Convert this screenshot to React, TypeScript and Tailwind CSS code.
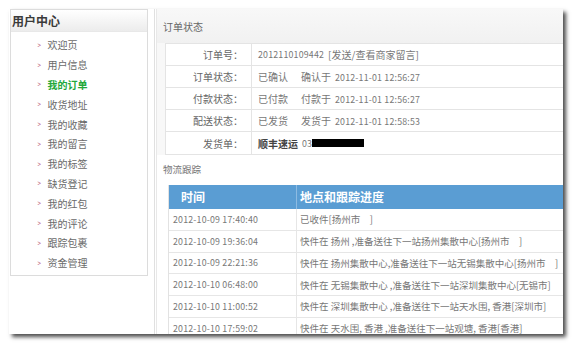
const menu = [
  "欢迎页",
  "用户信息",
  "我的订单",
  "收货地址",
  "我的收藏",
  "我的留言",
  "我的标签",
  "缺货登记",
  "我的红包",
  "我的评论",
  "跟踪包裹",
  "资金管理",
];

const tracks = [
  ["2012-10-09 17:40:40", "已收件[扬州市　]"],
  ["2012-10-09 19:36:04", "快件在 扬州 ,准备送往下一站扬州集散中心[扬州市　]"],
  ["2012-10-09 22:21:36", "快件在 扬州集散中心,准备送往下一站无锡集散中心[扬州市　]"],
  ["2012-10-10 06:48:00", "快件在 无锡集散中心 ,准备送往下一站深圳集散中心[无锡市]"],
  ["2012-10-10 11:00:52", "快件在 深圳集散中心 ,准备送往下一站天水围, 香港[深圳市]"],
  ["2012-10-10 17:59:02", "快件在 天水围, 香港 ,准备送往下一站观塘, 香港[香港]"],
];

const font = { fontFamily: '"Noto Sans CJK SC", "DejaVu Sans", sans-serif' };

const Num = ({ children }: { children: React.ReactNode }) => (
  <span className="text-[8.8px] tracking-[0.2px]">{children}</span>
);

const Sidebar = () => (
  <div className="w-[138px] shrink-0">
    <div className="border border-[#dcdcdc] bg-white h-[267px]">
      <div className="h-[22px] flex items-center pl-[1px] bg-gradient-to-b from-white to-[#ececec] border-b border-[#e8e8e8] text-[12px] font-bold text-[#3a3a3a]">
        用户中心
      </div>
      <ul className="pt-[3px]">
        {menu.map((m) => (
          <li key={m} className="h-[19.8px] flex items-center pl-[26px] text-[10px]">
            <span className="text-[#b0406a] text-[8px] mr-[6px] scale-x-75">&gt;</span>
            <span className={m === "我的订单" ? "text-[#22a83a] font-bold" : "text-[#6a6a6a]"}>{m}</span>
          </li>
        ))}
      </ul>
    </div>
  </div>
);

const OrderRow = ({ label, children }: { label: string; children: React.ReactNode }) => (
  <div className="flex h-[22px] border-b border-[#e4e4e4] last:border-b-0">
    <div className="w-[86px] shrink-0 text-right pr-[8px] border-r border-[#e4e4e4] flex items-center justify-end text-[10px] text-[#666]">
      {label}：
    </div>
    <div className="flex items-center pl-[6px] text-[10px] text-[#777] whitespace-nowrap">{children}</div>
  </div>
);

const StatusRow = ({ label, state, verb, time }: { label: string; state: string; verb: string; time: string }) => (
  <OrderRow label={label}>
    <span className="w-[43px]">{state}</span>
    <span>{verb}</span>
    <span className="ml-[4px]">
      <Num>{time}</Num>
    </span>
  </OrderRow>
);

export default function App() {
  return (
    <div className="w-[574px] h-[345px] bg-white overflow-hidden" style={font}>
      <div className="ml-[9px] mt-[9px] w-[554px] h-[325px] bg-white overflow-hidden flex shadow-[3px_3px_4px_rgba(0,0,0,0.7)]">
        <div className="pl-[1px] flex">
          <Sidebar />
        </div>
        <div className="w-[7px] shrink-0 border-r border-[#e0e0e0]" />
        <div className="flex-1 min-w-0 border-l border-[#e8e8e8] ml-[1px] bg-[#f8f8f8]">
          <div className="h-[34px] flex items-center pl-[6px] text-[10px] text-[#666] bg-gradient-to-b from-[#f8f8f8] to-[#f1f1f1]">
            订单状态
          </div>
          <div className="ml-[8px] bg-white border border-[#e4e4e4] border-r-0">
            <OrderRow label="订单号">
              <Num>2012110109442</Num>
              <span className="ml-[4px]">[发送/查看商家留言]</span>
            </OrderRow>
            <StatusRow label="订单状态" state="已确认" verb="确认于" time="2012-11-01 12:56:27" />
            <StatusRow label="付款状态" state="已付款" verb="付款于" time="2012-11-01 12:56:27" />
            <StatusRow label="配送状态" state="已发货" verb="发货于" time="2012-11-01 12:58:53" />
            <OrderRow label="发货单">
              <span className="font-bold text-[#444] text-[10px]">顺丰速运</span>
              <span className="ml-[4px]">
                <Num>03</Num>
              </span>
              <span className="inline-block w-[52px] h-[8px] bg-black" />
            </OrderRow>
          </div>
          <div className="h-[28px] flex items-center pl-[6px] text-[9.5px] text-[#777] bg-white">物流跟踪</div>
          <div className="bg-white pl-[11px] pt-[2px]">
            <div className="border-l border-[#e2e2e2]">
              <div className="flex h-[24px] bg-[#5a9dd3] text-white font-bold text-[12px]">
                <div className="w-[128px] flex items-center pl-[12px] border-r border-[#8dbbe2]">时间</div>
                <div className="flex-1 flex items-center pl-[3px]">地点和跟踪进度</div>
              </div>
              {tracks.map(([t, d]) => (
                <div key={t} className="flex h-[21.8px] border-b border-[#e6e6e6] text-[9.5px] text-[#777] whitespace-nowrap">
                  <div className="w-[128px] shrink-0 flex items-center pl-[4px] border-r border-[#e6e6e6]">
                    <Num>{t}</Num>
                  </div>
                  <div className="flex items-center pl-[3px]">{d}</div>
                </div>
              ))}
            </div>
          </div>
        </div>
      </div>
    </div>
  );
}
